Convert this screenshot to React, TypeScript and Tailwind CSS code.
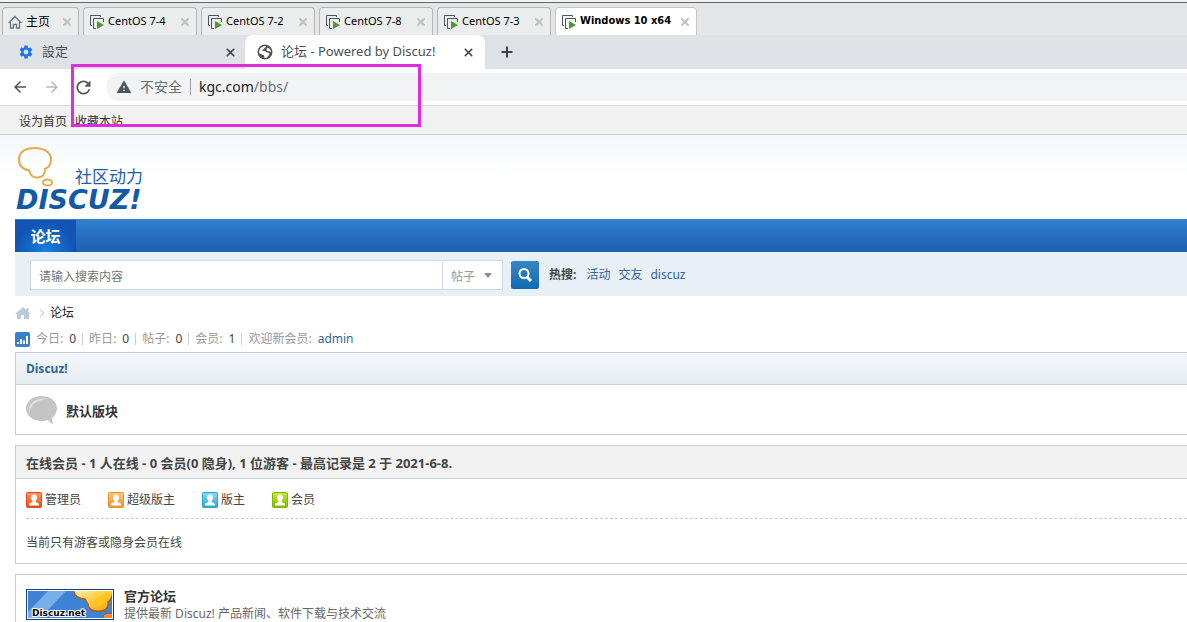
import React from "react";
import { ChevronRight, Plus, X } from "lucide-react";
import { MdArrowBack, MdArrowForward, MdRefresh, MdSettings, MdWarning } from "react-icons/md";

const machines = [
  { name: "CentOS 7-4", active: false },
  { name: "CentOS 7-2", active: false },
  { name: "CentOS 7-8", active: false },
  { name: "CentOS 7-3", active: false },
  { name: "Windows 10 x64", active: true },
];

const stats = [
  { label: "今日", value: "0" },
  { label: "昨日", value: "0" },
  { label: "帖子", value: "0" },
  { label: "会员", value: "1" },
];

const groups = [
  { name: "管理员", from: "#ff9a62", to: "#e8491c" },
  { name: "超级版主", from: "#fbc873", to: "#e6942c" },
  { name: "版主", from: "#8bdcf5", to: "#27a5d3" },
  { name: "会员", from: "#c5e83a", to: "#7fb800" },
];

const HomeIcon = () => (
  <svg width="14" height="14" viewBox="0 0 14 14" fill="none" stroke="#6b757e" className="shrink-0">
    <path d="M0.700 8L7 1.500L13.300 8" strokeWidth="1.300" />
    <path d="M2.500 7v6H5.500V9.500h3V13h3V7" strokeWidth="1.300" />
  </svg>
);

const MachineIcon = () => (
  <svg width="16" height="16" viewBox="0 0 16 16" className="shrink-0">
    <path d="M3 11.500H1.500v-10h10V3" fill="none" stroke="#4a5560" />
    <path d="M7 14.500H4.500v-10h10V8" fill="none" stroke="#4a5560" />
    <path d="M8 7v8l7-4z" fill="#4d9a28" />
  </svg>
);

const GlobeIcon = () => (
  <svg width="16" height="16" viewBox="0 0 16 16" className="shrink-0">
    <circle cx="8" cy="8" r="7.500" fill="#50555a" />
    <path d="M2 8.500C2 5 4 3 7.500 2c2-.5 2 1 .5 1.500c-1 .5-.5 1.500-2 2S5 7 7 7s2 1.500 3.500 1.500S13 9.500 12 11s-2 3-4 3c-1 0-.5-1.500-1-2.500S3.500 11 2 8.500z" fill="white" />
    <path d="M10.500 3.500l2.500 1.700c.7 1 1 2 1 3l-2-1c-1-.5-2.500-.5-2.500-1.500s1-1 1-2.200z" fill="white" />
  </svg>
);

const MachineTabs = () => (
  <div className="flex h-8 items-end gap-1 overflow-hidden bg-[#e4e5e6] pl-0.5">
    <div className="flex h-7 w-[77px] shrink-0 items-center rounded-t border border-b-0 border-[#b4b6b8] bg-[#ebecec] px-[5px]">
      <button className="flex items-center gap-1 text-black">
        <HomeIcon />
        主页
      </button>
      <button aria-label="关闭" className="ml-auto text-[#bfc1c3]">
        <X size={12} strokeWidth={4} />
      </button>
    </div>
    {machines.map((machine) => (
      <div
        key={machine.name}
        className={
          machine.active
            ? "flex h-7 w-[142px] shrink-0 items-center rounded-t border border-b-0 border-[#c4c6c8] bg-white px-[5px]"
            : "flex h-7 w-[114px] shrink-0 items-center rounded-t border border-b-0 border-[#b4b6b8] bg-[#ebecec] px-[5px]"
        }
      >
        <button
          className={
            machine.active
              ? "flex items-center gap-[3px] whitespace-nowrap font-['DejaVu_Sans_Condensed','DejaVu_Sans',sans-serif] text-[11px] font-bold text-black"
              : "flex items-center gap-[3px] whitespace-nowrap text-[11px] text-black"
          }
        >
          <MachineIcon />
          {machine.name}
        </button>
        <button aria-label="关闭" className="ml-auto text-[#bfc1c3]">
          <X size={12} strokeWidth={4} />
        </button>
      </div>
    ))}
  </div>
);

const BrowserTabs = () => (
  <div className="flex h-[34px] bg-[#dee1e6] text-[13px] text-[#4b4f54]">
    <div className="flex w-[245px] items-center pl-[18px] pr-2">
      <button className="flex items-center gap-2">
        <MdSettings size={16} className="text-[#1a73e8]" />
        設定
      </button>
      <button aria-label="关闭" className="ml-auto text-[#3c4043]">
        <X size={13} strokeWidth={3} />
      </button>
    </div>
    <div className="flex w-60 items-center rounded-t-lg bg-white pl-3 pr-2.5">
      <button className="flex items-center gap-2 whitespace-nowrap">
        <GlobeIcon />
        论坛 - Powered by Discuz!
      </button>
      <button aria-label="关闭" className="ml-auto text-[#3c4043]">
        <X size={13} strokeWidth={3} />
      </button>
    </div>
    <button aria-label="新标签页" className="ml-3.5 text-[#3c4043]">
      <Plus size={16} strokeWidth={3} />
    </button>
  </div>
);

const Toolbar = () => (
  <div className="flex h-[37px] items-center border-b border-[#d8dadd] bg-white pl-[11px] text-[#50555a]">
    <button aria-label="后退">
      <MdArrowBack size={18} />
    </button>
    <button aria-label="前进" className="ml-3.5 text-[#babcbe]">
      <MdArrowForward size={18} />
    </button>
    <button aria-label="刷新" className="ml-3">
      <MdRefresh size={21} />
    </button>
    <div className="ml-3 flex h-7 flex-1 items-center rounded-l-full bg-[#f1f3f4] pl-2.5 text-sm">
      <MdWarning size={16} />
      <span className="ml-2 text-[#6a6f74]">不安全</span>
      <span className="mx-2 h-4 w-px bg-[#9aa0a6]" />
      <a href="#address" className="text-[#6a6f74]">
        <span className="text-[#202124]">kgc.com</span>/bbs/
      </a>
    </div>
  </div>
);

const Logo = () => (
  <svg width="140" height="70" viewBox="0 0 140 70" role="img" aria-label="Discuz! 社区动力">
    <g fill="none" stroke="#e5ab4a" strokeWidth="2">
      <path d="M14.500 25.500C7 24.500 4 20 4 14.500C4 7 10.500 3 19.500 3S36 7 36 14.500c0 5-2 8-6 9.500c0 5.500-3 8.500-8 8.500s-7-2.500-7.500-7z" />
      <ellipse cx="32.500" cy="37.500" rx="4.500" ry="3" />
    </g>
    <text x="60" y="38" fontSize="17" fill="#1c5fa8">
      社区动力
    </text>
    <text
      x="1"
      y="64"
      fontSize="27"
      fontWeight="bold"
      fontStyle="italic"
      fill="#1259a6"
      fontFamily="DejaVu Sans, sans-serif"
    >
      DISCUZ!
    </text>
  </svg>
);

const SearchBar = () => (
  <form className="flex h-11 items-center bg-[#e8eff5] pl-[15px] pt-0.5">
    <div className="flex h-[30px] w-[473px] border border-[#cfdbe4] bg-white">
      <input
        type="text"
        aria-label="搜索"
        placeholder="请输入搜索内容"
        className="min-w-0 flex-1 px-2 pt-1 outline-none placeholder:text-[#757575]"
      />
      <div className="relative w-[60px] border-l border-[#cfdbe4]">
        <select aria-label="搜索类型" className="h-full w-full appearance-none bg-transparent pl-2 pt-1 text-[#999]">
          <option>帖子</option>
        </select>
        <svg width="8" height="5" viewBox="0 0 8 5" className="pointer-events-none absolute right-2.5 top-3">
          <path d="M0 0h8L4 5z" fill="#8c8c8c" />
        </svg>
      </div>
    </div>
    <button
      type="button"
      aria-label="搜索"
      className="ml-2 flex size-7 items-center justify-center rounded-xs bg-linear-to-b from-[#3686c5] to-[#0d6bb0]"
    >
      <svg width="16" height="16" viewBox="0 0 16 16" fill="none" stroke="white">
        <circle cx="7" cy="6.500" r="4.500" strokeWidth="2" />
        <path d="M10 10l4 4" strokeWidth="3" />
      </svg>
    </button>
    <div className="ml-2.5 flex gap-2 text-[#369]">
      <strong className="mr-0.5 text-[#444]">热搜:</strong>
      <a href="#activity">活动</a>
      <a href="#friends">交友</a>
      <a href="#discuz">discuz</a>
    </div>
  </form>
);

const UserIcon = ({ id, from, to }: { id: string; from: string; to: string }) => (
  <svg width="16" height="16" viewBox="0 0 16 16">
    <defs>
      <linearGradient id={id} x1="0" y1="0" x2="0" y2="1">
        <stop offset="0" stopColor={from} />
        <stop offset="1" stopColor={to} />
      </linearGradient>
    </defs>
    <rect x="0.500" y="0.500" width="15" height="15" rx="1" fill={`url(#${id})`} stroke={to} />
    <path d="M8 2.500c2 0 3 1.300 3 3S10 8.500 9.500 9v1c1.500.5 3.500 1 3.500 2.500v1H3v-1C3 11 5 10.500 6.500 10V9C6 8.500 5 7.200 5 5.500s1-3 3-3z" fill="white" />
  </svg>
);

const SiteBanner = () => (
  <svg width="88" height="31" viewBox="0 0 88 31" className="shrink-0" role="img" aria-label="Discuz.net">
    <defs>
      <linearGradient id="cloud" x1="0" y1="0" x2="1" y2="1">
        <stop offset="0" stopColor="#fff3c4" />
        <stop offset="0.500" stopColor="#ffce3d" />
        <stop offset="1" stopColor="#f39a12" />
      </linearGradient>
      <clipPath id="bannerInside">
        <rect x="2" y="2" width="84" height="27" />
      </clipPath>
    </defs>
    <rect width="88" height="31" fill="#123f80" />
    <rect x="1" y="1" width="86" height="29" fill="white" />
    <g clipPath="url(#bannerInside)">
      <rect x="2" y="2" width="84" height="27" fill="#3f83d5" />
      <path d="M22 2h18L14 29H2v-6z" fill="#79aee8" />
      <path
        d="M47 0c1 6 5 10 12 10c1 1 1 3 3 5c0 5 5 8 12 7c6 0 9-4 8-9c3-2 5-5 5-13z"
        fill="url(#cloud)"
        stroke="#a85f1c"
        strokeWidth="1.500"
      />
      <path d="M67 16C68 8 76 8 82 3c1 8-5 17-15 13z" fill="#ffc51c" />
      <ellipse cx="83" cy="28" rx="6" ry="4" fill="#f58a35" stroke="#a84f1c" />
    </g>
    <text
      x="6"
      y="27"
      fontSize="9"
      fontWeight="bold"
      fill="black"
      stroke="white"
      strokeWidth="2"
      paintOrder="stroke"
      fontFamily="DejaVu Sans, sans-serif"
    >
      Discuz.net
    </text>
  </svg>
);

const Forum = () => (
  <div className="leading-[18px]">
    <div className="flex h-[29px] items-center gap-2 border-b border-[#cacdd0] bg-[#f1f1f1] pl-[19px] pt-[3px] text-[#333]">
      <a href="#home">设为首页</a>
      <a href="#favorite">收藏本站</a>
    </div>

    <header className="flex h-[84px] items-start bg-linear-to-b from-[#f3f8fc] to-white to-50% pl-[15px] pt-2.5">
      <a href="#forum">
        <Logo />
      </a>
    </header>

    <div className="pl-[15px]">
      <nav className="flex h-[33px] border-t border-[#3b80b8] bg-linear-to-b from-[#3080d2] to-[#1d60ad]">
        <a
          href="#forum"
          className="flex w-[61px] items-center justify-center bg-radial-[at_50%_100%] from-[#1780dd] to-[#1253b3] to-70% text-[15px] font-bold text-white"
        >
          论坛
        </a>
      </nav>

      <SearchBar />

      <div className="flex h-[34px] items-center">
        <a href="#home" aria-label="首页">
          <svg width="16" height="14" viewBox="0 0 16 14">
            <path d="M8 1L0 8h2v5h4V9h3v4h5V8h2l-2.500-2V2h-2v2z" fill="#b9cadb" />
          </svg>
        </a>
        <ChevronRight size={14} strokeWidth={1} className="ml-1 text-[#888]" />
        <a href="#forum" className="ml-px text-[#222]">
          论坛
        </a>
      </div>

      <div className="flex h-[22px] items-center pb-1 text-[#999]">
        <svg width="15" height="15" viewBox="0 0 15 15" className="mr-1.5">
          <rect width="15" height="15" rx="2" fill="#3a7fcb" />
          <path d="M3 10v2M6 7v5M9 8.500V12M12 4v8" stroke="white" strokeWidth="2" />
        </svg>
        {stats.map((stat) => (
          <React.Fragment key={stat.label}>
            <span className="flex gap-1.5">
              {stat.label}:<span className="text-[#444]">{stat.value}</span>
            </span>
            <span className="mx-1.5 h-3 w-px bg-[#ccc]" />
          </React.Fragment>
        ))}
        <span className="flex gap-1.5">
          欢迎新会员:
          <a href="#admin" className="text-[#369]">
            admin
          </a>
        </span>
      </div>

      <main className="flex flex-col gap-2.5">
        <section className="border border-r-0 border-[#c8ccd0]">
          <h2 className="flex h-8 items-center border-b border-[#c2d5e3] bg-linear-to-b from-[#f3f7fa] to-[#e6edf2] pl-2.5 font-bold text-[#369]">
            <a href="#category">Discuz!</a>
          </h2>
          <div className="flex h-[49px] items-center gap-2 pl-2.5">
            <svg width="32" height="30" viewBox="0 0 32 30">
              <path d="M15.500 1C24 1 31 6 31 13.500c0 4-2 7-5 9.500l1 6c-2-.5-3.500-2-5-4c-2 .700-4 1-6.500 1C7 26 0 21 0 13.500S7 1 15.500 1z" fill="#c4c4c4" />
              <path d="M3 18C1 8 11 2 21 4C10 5 4 11 3 18z" fill="#e0e0e0" />
            </svg>
            <a href="#default" className="mt-0.5 text-[13px] font-bold text-[#333]">
              默认版块
            </a>
          </div>
        </section>

        <section className="border border-r-0 border-[#c8ccd0]">
          <h2 className="flex h-[33px] items-center border-b border-[#c2d5e3] bg-[#f2f2f2] pl-2.5 pt-0.5 text-[13px] font-bold text-[#444]">
            在线会员 - 1 人在线 - 0 会员(0 隐身), 1 位游客 - 最高记录是 2 于 2021-6-8.
          </h2>
          <div className="pl-2.5">
            <ul className="flex h-10 items-center gap-[27px] border-b border-dashed border-[#ccc] pt-0.5 text-[#444]">
              {groups.map((group) => (
                <li key={group.name} className="flex items-center gap-[3px]">
                  <UserIcon id={`group-${group.to.slice(1)}`} from={group.from} to={group.to} />
                  {group.name}
                </li>
              ))}
            </ul>
            <p className="flex h-11 items-center pt-1 text-[#444]">当前只有游客或隐身会员在线</p>
          </div>
        </section>

        <section className="flex items-start gap-2.5 border border-r-0 border-b-0 border-[#c8ccd0] pl-2.5 pt-3">
          <a href="#official" className="mt-0.5">
            <SiteBanner />
          </a>
          <div>
            <a href="#official" className="block text-[13px] font-bold text-[#333]">
              官方论坛
            </a>
            <p className="text-[#666]">提供最新 Discuz! 产品新闻、软件下载与技术交流</p>
          </div>
        </section>
      </main>
    </div>
  </div>
);

export default function App() {
  return (
    <div className="relative overflow-hidden bg-white font-['Noto_Sans','Noto_Sans_CJK_SC',sans-serif] text-xs">
      <div className="h-[3px] border-b border-[#666] bg-[#f0f2f4]" />
      <MachineTabs />
      <BrowserTabs />
      <Toolbar />
      <Forum />
      <div className="pointer-events-none absolute left-[71px] top-16 h-[63px] w-[350px] border-3 border-[#e02be0]" />
    </div>
  );
}
